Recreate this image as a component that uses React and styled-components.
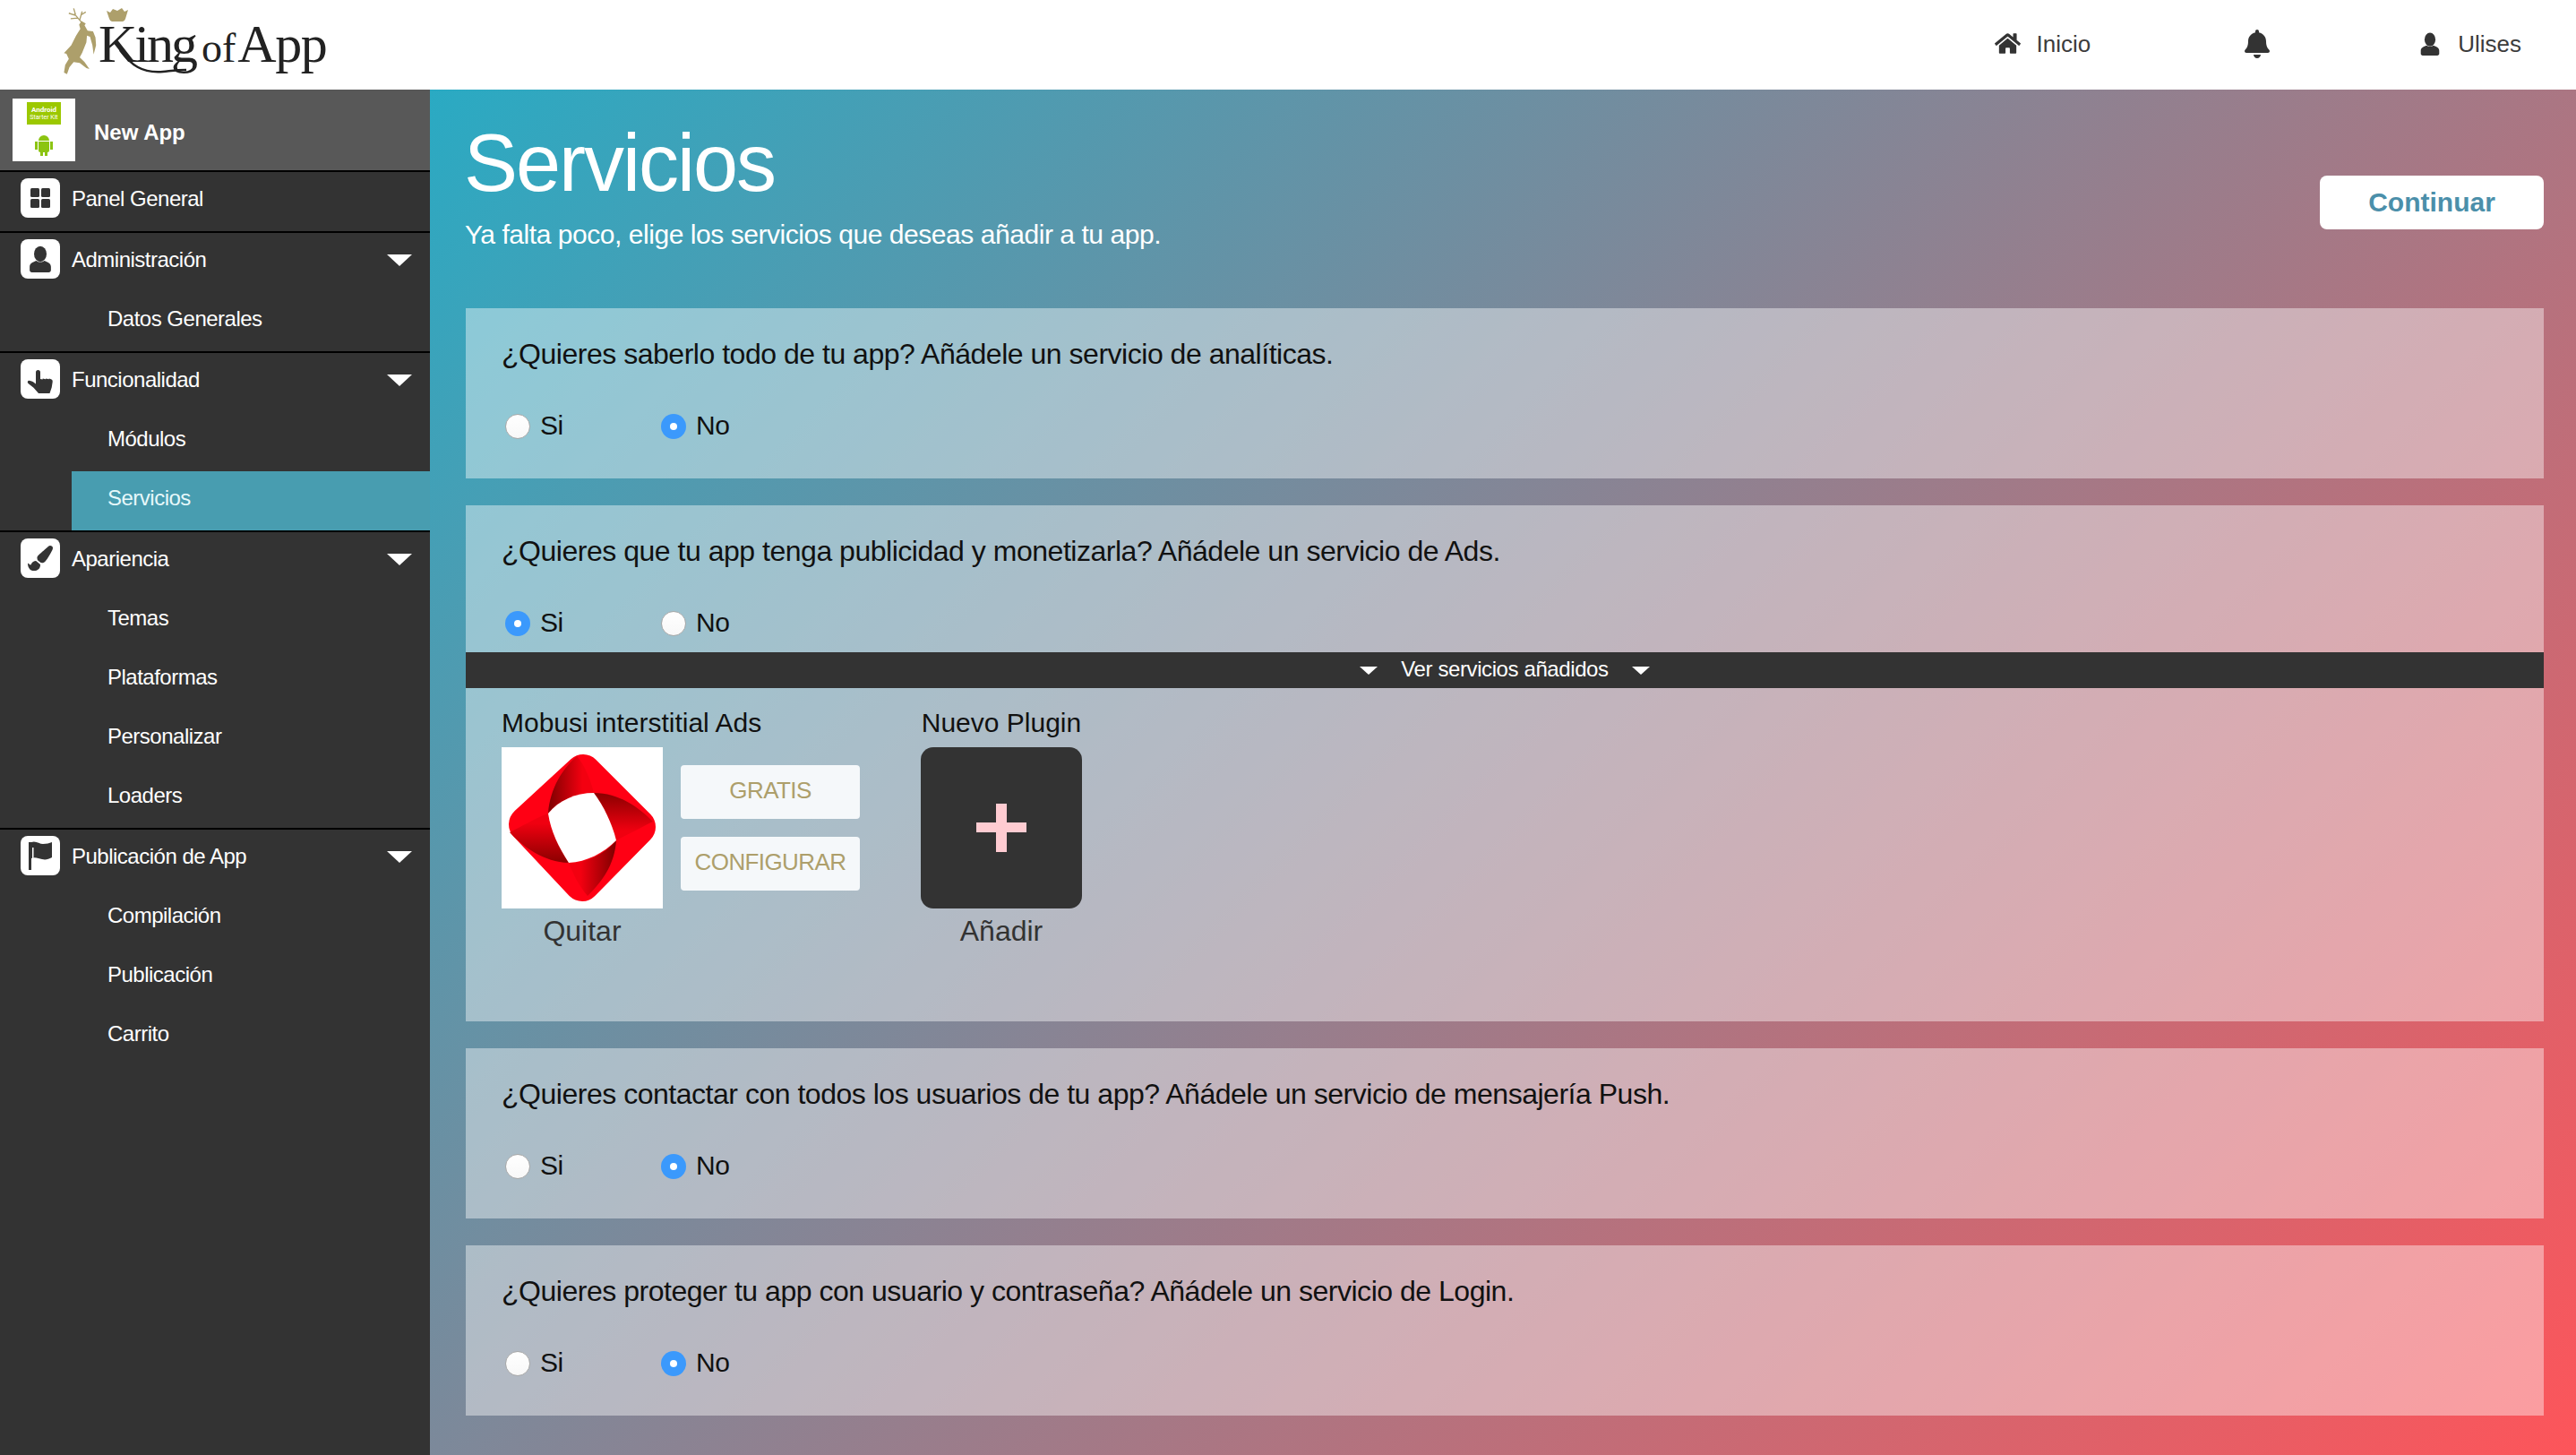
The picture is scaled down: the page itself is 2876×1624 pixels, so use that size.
import React from 'react';
import styled, { createGlobalStyle } from 'styled-components';
import { FaHome, FaBell, FaPaintBrush } from 'react-icons/fa';

const Global = createGlobalStyle`
  html, body { margin: 0; padding: 0; background: #333; }
  body { font-family: "Liberation Sans", Arial, sans-serif; }
  * { box-sizing: border-box; }
`;

const Page = styled.div`
  width: 100%;
  min-height: 1624px;
  display: flex;
  flex-direction: column;
`;
const Header = styled.header`
  height: 100px;
  background: #fff;
  display: flex;
  align-items: center;
  justify-content: space-between;
  padding: 0 61px 0 68px;
`;
const Logo = styled.div`
  position: relative;
  display: flex;
  align-items: flex-start;
  height: 100px;
`;
const Stag = styled.svg`
  width: 42px;
  height: 76px;
  margin-top: 8px;
  flex: none;
`;
const LogoText = styled.div`
  font-family: "Liberation Serif", "Times New Roman", serif;
  color: #222;
  font-size: 60px;
  line-height: 64px;
  margin: 17px 0 0 0;
  white-space: nowrap;
`;
const LogoKing = styled.span`
  letter-spacing: -3px;
`;
const LogoOf = styled.span`
  font-size: 46px;
  letter-spacing: 0;
  margin: 0 2px 0 7px;
`;
const LogoApp = styled.span`
  letter-spacing: -1.4px;
`;
const Crown = styled.svg`
  position: absolute;
  left: 51px;
  top: 9px;
  width: 24px;
  height: 15px;
`;
const Swash = styled.svg`
  position: absolute;
  left: 60px;
  top: 50px;
  width: 100px;
  height: 36px;
`;
const TopNav = styled.nav`
  display: flex;
  align-items: center;
  gap: 164px;
  color: #3c3c3c;
`;
const TopItem = styled.div`
  display: flex;
  align-items: center;
  gap: 18px;
  font-size: 26px;
  line-height: 30px;
  padding-bottom: 3px;
  margin-right: ${p => p.$shift || 0}px;
  svg { display: block; color: #333; }
`;
const Body = styled.div`
  flex: 1;
  display: flex;
  align-items: stretch;
`;
const Sidebar = styled.aside`
  width: 480px;
  flex: none;
  background: #333;
  color: #fff;
`;
const AppRow = styled.div`
  height: 90px;
  background: #585858;
  display: flex;
  align-items: center;
  padding-left: 14px;
  font-weight: 700;
  font-size: 24px;
  gap: 21px;
`;
const AppName = styled.span`
  padding-top: 6px;
`;
const Thumb = styled.div`
  width: 70px;
  height: 70px;
  background: #fff;
  display: flex;
  flex-direction: column;
  align-items: center;
  padding-top: 4px;
`;
const ThumbBadge = styled.div`
  width: 38px;
  height: 25px;
  background: #9cc800;
  color: #fff;
  display: flex;
  flex-direction: column;
  align-items: center;
  justify-content: center;
  font-family: "Roboto", "Liberation Sans", sans-serif;
  font-size: 8px;
  line-height: 9px;
  font-weight: 700;
`;
const ThumbSmall = styled.span`
  font-size: 7px;
  line-height: 8px;
  font-weight: 400;
`;
const Robot = styled.svg`
  width: 22px;
  height: 26px;
  margin-top: 9px;
`;
const Group = styled.section`
  border-top: 2px solid #000;
`;
const Row = styled.div`
  height: 66px;
  display: flex;
  align-items: flex-start;
  padding: 7px 20px 0 23px;
  font-size: 24px;
  letter-spacing: -0.5px;
  line-height: 46px;
`;
const IconBox = styled.span`
  width: 44px;
  height: 44px;
  border-radius: 8px;
  background: #fff;
  color: #333;
  display: flex;
  align-items: center;
  justify-content: center;
  margin-right: 13px;
  flex: none;
`;
const RowLabel = styled.span`
  flex: 1;
`;
const Caret = styled.span`
  width: 0;
  height: 0;
  border-left: ${p => p.$w / 2}px solid transparent;
  border-right: ${p => p.$w / 2}px solid transparent;
  border-top: ${p => p.$h}px solid #fff;
  flex: none;
`;
const RowCaret = styled(Caret)`
  margin-top: 17px;
`;
const SubRow = styled.div`
  height: 66px;
  margin-left: 80px;
  padding-left: 40px;
  font-size: 24px;
  letter-spacing: -0.5px;
  line-height: 60px;
  background: ${p => (p.$active ? '#489db0' : 'transparent')};
  color: ${p => (p.$active ? '#e6f8fa' : '#fff')};
`;
const Main = styled.main`
  flex: 1;
  min-height: 1524px;
  background: linear-gradient(135deg, #2aaac3 0%, #ff5459 100%);
  padding: 0 36px 44px 40px;
`;
const TitleBar = styled.div`
  height: 244px;
  display: flex;
  justify-content: space-between;
  align-items: flex-start;
`;
const Title = styled.h1`
  margin: 37px 0 0 -2px;
  font-size: 90px;
  line-height: 90px;
  font-weight: 400;
  letter-spacing: -2px;
  color: #fff;
`;
const Sub = styled.p`
  margin: 17px 0 0 -1px;
  font-size: 30px;
  line-height: 36px;
  letter-spacing: -0.45px;
  color: #fff;
`;
const Continue = styled.button`
  width: 250px;
  height: 60px;
  margin-top: 96px;
  border: 0;
  border-radius: 8px;
  background: #fff;
  color: #4b8faa;
  font: 700 30px "Liberation Sans", Arial, sans-serif;
`;
const Card = styled.section`
  background: rgba(255, 255, 255, 0.42);
  padding: 30px 40px 44px;
  margin-bottom: 30px;
`;
const ExpandedCard = styled(Card)`
  padding-bottom: 0;
  height: 576px;
`;
const Question = styled.p`
  margin: 0 0 46px;
  font-size: 32px;
  line-height: 42px;
  letter-spacing: -0.48px;
  color: #111;
`;
const Radios = styled.div`
  display: flex;
  height: 28px;
  padding-left: 4px;
`;
const RadioItem = styled.label`
  width: 174px;
  display: flex;
  align-items: center;
  gap: 11px;
  font-size: 30px;
  line-height: 28px;
  letter-spacing: -0.4px;
  color: #111;
`;
const RadioText = styled.span`
  padding-bottom: 3px;
`;
const RadioDot = styled.span`
  width: 28px;
  height: 28px;
  border-radius: 50%;
  display: flex;
  align-items: center;
  justify-content: center;
  background: ${p => (p.$on ? '#3b99fc' : 'linear-gradient(#fff, #f8f8f8)')};
  border: ${p => (p.$on ? '0' : '1px solid #a9a9a9')};
  &::after {
    content: '';
    width: 8px;
    height: 8px;
    border-radius: 50%;
    background: ${p => (p.$on ? '#fff' : 'transparent')};
  }
`;
const Bar = styled.div`
  margin: 18px -40px 0;
  height: 40px;
  background: #333;
  color: #fff;
  display: flex;
  align-items: center;
  justify-content: center;
  gap: 26px;
  font-size: 24px;
  letter-spacing: -0.4px;
`;
const BarText = styled.span`
  padding-bottom: 2px;
`;
const Plugins = styled.div`
  display: flex;
  gap: 68px;
  padding-top: 20px;
`;
const Plugin = styled.div`
  display: flex;
  flex-direction: column;
`;
const PluginName = styled.div`
  font-size: 30px;
  line-height: 38px;
  color: #111;
  margin-bottom: 8px;
  text-align: ${p => (p.$center ? 'center' : 'left')};
`;
const PluginBody = styled.div`
  display: flex;
  gap: 20px;
  align-items: flex-start;
`;
const TileCol = styled.div`
  width: 180px;
  display: flex;
  flex-direction: column;
  align-items: center;
`;
const MobusiTile = styled.svg`
  width: 180px;
  height: 180px;
  display: block;
  background: #fff;
`;
const AddTile = styled.div`
  width: 180px;
  height: 180px;
  background: #333;
  border-radius: 14px;
  display: flex;
  align-items: center;
  justify-content: center;
  svg { display: block; }
`;
const Caption = styled.div`
  font-size: 32px;
  line-height: 40px;
  color: #333;
  margin-top: 5px;
`;
const ButtonCol = styled.div`
  display: flex;
  flex-direction: column;
  gap: 20px;
  padding-top: 20px;
`;
const TagButton = styled.button`
  width: 200px;
  height: 60px;
  border: 0;
  border-radius: 4px;
  background: #f5f8fa;
  color: #ad9f6b;
  font: 400 26px "Liberation Sans", Arial, sans-serif;
  letter-spacing: -0.6px;
  padding: 0 0 4px;
`;

const UserGlyph = ({ size, color = '#333' }) => (
  <svg width={size} height={size} viewBox="0 0 24 24" fill={color}>
    <ellipse cx="12" cy="7.5" rx="5.6" ry="7" />
    <path d="M8.5 13.5c-3 1.3-6 2.2-6 5.5v3c0 1.2.8 2 2 2h15c1.2 0 2-.8 2-2v-3c0-3.300-3-4.200-6-5.500-1.800 1.700-5.200 1.700-7 0z" />
  </svg>
);
const GridGlyph = () => (
  <svg width="24" height="24" viewBox="0 0 24 24" fill="#333">
    <rect x="1" y="1" width="10" height="10" rx="1.500" />
    <rect x="13" y="1" width="10" height="10" rx="1.500" />
    <rect x="1" y="13" width="10" height="10" rx="1.500" />
    <rect x="13" y="13" width="10" height="10" rx="1.500" />
  </svg>
);
const HandGlyph = () => (
  <svg width="44" height="44" viewBox="0 0 44 44" fill="#333">
    <path d="M17 14.500a2.500 2.500 0 0 1 5 0V22l2.500.6.300-1.100 3.200.8.400-.9 3.100.8.300-.6 2.200.6c1.300.4 1.900 1.500 1.700 3l-1 6.300-2.200 6.500H20l-5.500-6.200-6-4.800c-1.300-1.100-.7-3.300 1-3.300.6 0 3.500 1 4.500 1.600l3 2.200z" />
  </svg>
);
const FlagGlyph = () => (
  <svg width="30" height="34" viewBox="0 0 30 34" fill="#333">
    <path d="M2 2h3v31H2z" />
    <path d="M5 2c5-2 9 2 13 2 4 0 7-1 10-2v17c-4 2-7 3-11 2-4-1-8-3-12-1z" />
    <path d="M6 8h1.500v14H6z" fill="#fff" />
  </svg>
);

const Radio = ({ on, children }) => (
  <RadioItem>
    <RadioDot $on={on} />
    <RadioText>{children}</RadioText>
  </RadioItem>
);

const YesNo = ({ yes }) => (
  <Radios>
    <Radio on={yes}>Si</Radio>
    <Radio on={!yes}>No</Radio>
  </Radios>
);

const nav = [
  { label: 'Panel General', icon: <GridGlyph /> },
  { label: 'Administración', icon: <UserGlyph size={30} />, subs: ['Datos Generales'] },
  { label: 'Funcionalidad', icon: <HandGlyph />, subs: ['Módulos', 'Servicios'] },
  { label: 'Apariencia', icon: <FaPaintBrush size={28} />, subs: ['Temas', 'Plataformas', 'Personalizar', 'Loaders'] },
  { label: 'Publicación de App', icon: <FlagGlyph />, subs: ['Compilación', 'Publicación', 'Carrito'] },
];

const MobusiLogo = () => (
  <MobusiTile viewBox="0 0 180 180">
    <defs>
      <linearGradient id="mTop" x1="0" x2="1" y1="0" y2="0">
        <stop offset="0" stopColor="#7d0000" />
        <stop offset="0.75" stopColor="#f30010" />
      </linearGradient>
      <linearGradient id="mRight" x1="0" x2="0" y1="0" y2="1">
        <stop offset="0" stopColor="#8a0000" />
        <stop offset="0.8" stopColor="#f00010" />
      </linearGradient>
      <linearGradient id="mBottom" x1="1" x2="0" y1="0" y2="0">
        <stop offset="0" stopColor="#7d0000" />
        <stop offset="0.75" stopColor="#f30010" />
      </linearGradient>
      <linearGradient id="mLeft" x1="0" x2="0" y1="1" y2="0">
        <stop offset="0" stopColor="#8a0000" />
        <stop offset="0.8" stopColor="#f00010" />
      </linearGradient>
    </defs>
    <path d="M91 28L152 89 90 152 28 86z" fill="#ff0014" stroke="#ff0014" strokeWidth="40" strokeLinejoin="round" />
    <path d="M52 74C54 46 68 24 84 10c9 10 16 28 19 41-20 0-39 8-51 23z" fill="url(#mTop)" />
    <path d="M103 51c28 0 50 16 66 32-12 6-27 14-41 21-5-20-14-38-25-53z" fill="url(#mRight)" />
    <path d="M128 104c-2 28-16 46-32 62-9-10-16-24-21-37 20 0 39-9 53-25z" fill="url(#mBottom)" />
    <path d="M75 129c-28-1-50-17-66-34 12-6 29-16 43-21 3 20 12 38 23 55z" fill="url(#mLeft)" />
    <path d="M103 51c11 15 20 33 25 53-14 14-33 24-53 25-11-17-20-35-23-55 12-15 31-23 51-23z" fill="#fff" />
  </MobusiTile>
);

export default function App() {
  return (
    <Page>
      <Global />
      <Header>
        <Logo>
          <Stag viewBox="24 24 120 225">
            <path fill="#ad9f6b" d="M90 70l14 8-4 6 10 18 18 2 8 20 2 26-8 30-4-30-8-28-10-4-2 22-14 35-8 15 16 15 16 23-10-3-22-17-20-3-14 17-8 23-10-5 4-25 12-20-8-17-8-2 24-26 16-32 14-22-4-14z" />
            <path fill="none" stroke="#ad9f6b" strokeWidth="4" d="M90 74L66 46M78 60L54 62M72 52L48 44M70 48L64 28M84 66L92 38M88 50L104 40" />
          </Stag>
          <Crown viewBox="0 0 24 15">
            <path fill="#ad9f6b" d="M0 3l4 2 3-4 5 2 5-3 3 4 4-2-3 10q-1 3-3 3H6q-2 0-3-3z" />
          </Crown>
          <LogoText>
            <LogoKing>King</LogoKing><LogoOf>of</LogoOf><LogoApp>App</LogoApp>
          </LogoText>
          <Swash viewBox="0 0 100 36">
            <path fill="none" stroke="#222" strokeWidth="2.500" d="M6 6C18 22 30 32 54 30c10-1 16-2 26-2" />
          </Swash>
        </Logo>
        <TopNav>
          <TopItem $shift={6}><FaHome size={29} />Inicio</TopItem>
          <TopItem><FaBell size={32} /></TopItem>
          <TopItem><UserGlyph size={26} />Ulises</TopItem>
        </TopNav>
      </Header>
      <Body>
        <Sidebar>
          <AppRow>
            <Thumb>
              <ThumbBadge>Android<ThumbSmall>Starter Kit</ThumbSmall></ThumbBadge>
              <Robot viewBox="0 0 22 26">
                <path fill="#8cc412" d="M5 9a6 6 0 0 1 12 0zM5 10h12v10q0 2-2 2h-8q-2 0-2-2zM1 10h3v9H1zM18 10h3v9h-3zM7 22h3v4H7zM12 22h3v4h-3z" />
              </Robot>
            </Thumb>
            <AppName>New App</AppName>
          </AppRow>
          {nav.map(item => (
            <Group key={item.label}>
              <Row>
                <IconBox>{item.icon}</IconBox>
                <RowLabel>{item.label}</RowLabel>
                {item.subs && <RowCaret $w={28} $h={13} />}
              </Row>
              {item.subs && item.subs.map(s => (
                <SubRow key={s} $active={s === 'Servicios'}>{s}</SubRow>
              ))}
            </Group>
          ))}
        </Sidebar>
        <Main>
          <TitleBar>
            <div>
              <Title>Servicios</Title>
              <Sub>Ya falta poco, elige los servicios que deseas añadir a tu app.</Sub>
            </div>
            <Continue>Continuar</Continue>
          </TitleBar>
          <Card>
            <Question>¿Quieres saberlo todo de tu app? Añádele un servicio de analíticas.</Question>
            <YesNo yes={false} />
          </Card>
          <ExpandedCard>
            <Question>¿Quieres que tu app tenga publicidad y monetizarla? Añádele un servicio de Ads.</Question>
            <YesNo yes />
            <Bar>
              <Caret $w={20} $h={9} />
              <BarText>Ver servicios añadidos</BarText>
              <Caret $w={20} $h={9} />
            </Bar>
            <Plugins>
              <Plugin>
                <PluginName>Mobusi interstitial Ads</PluginName>
                <PluginBody>
                  <TileCol>
                    <MobusiLogo />
                    <Caption>Quitar</Caption>
                  </TileCol>
                  <ButtonCol>
                    <TagButton>GRATIS</TagButton>
                    <TagButton>CONFIGURAR</TagButton>
                  </ButtonCol>
                </PluginBody>
              </Plugin>
              <Plugin>
                <PluginName $center>Nuevo Plugin</PluginName>
                <TileCol>
                  <AddTile>
                    <svg width="56" height="54" viewBox="0 0 56 54">
                      <path fill="#ffccd2" d="M22 0h12v21h22v11H34v22H22V32H0V21h22z" />
                    </svg>
                  </AddTile>
                  <Caption>Añadir</Caption>
                </TileCol>
              </Plugin>
            </Plugins>
          </ExpandedCard>
          <Card>
            <Question>¿Quieres contactar con todos los usuarios de tu app? Añádele un servicio de mensajería Push.</Question>
            <YesNo yes={false} />
          </Card>
          <Card>
            <Question>¿Quieres proteger tu app con usuario y contraseña? Añádele un servicio de Login.</Question>
            <YesNo yes={false} />
          </Card>
        </Main>
      </Body>
    </Page>
  );
}
